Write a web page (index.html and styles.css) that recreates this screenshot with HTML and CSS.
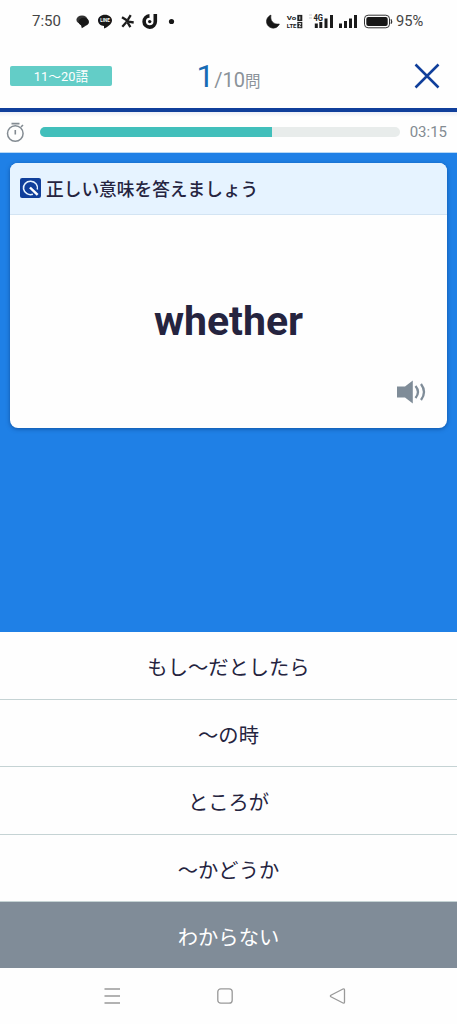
FILE: index.html
```html
<!DOCTYPE html>
<html lang="ja">
<head>
<meta charset="utf-8">
<meta name="viewport" content="width=device-width, initial-scale=1">
<title>英単語クイズ</title>
<link rel="stylesheet" href="styles.css">
</head>
<body>
<div class="app">
  <div class="status">
    <span class="clock">7:50</span>
    <svg class="notifications" width="100" height="20" viewBox="76 10 100 20">
      <ellipse cx="82" cy="18.800" rx="5.600" ry="4.300" fill="#333"/>
      <ellipse cx="83.800" cy="20.900" rx="5.200" ry="4.200" fill="#171717"/>
      <path d="M81 24l.8 3.300 4-2.500z" fill="#171717"/>
      <path d="M105 13.700c-4 0-7 2.500-7 5.700 0 3 2.500 5.200 6 5.600v2.500c3.500-1.600 8-4.500 8-8.100 0-3.200-3-5.700-7-5.700z" fill="#171717"/>
      <text class="line-mark" x="105" y="21.300" text-anchor="middle" textLength="9.500" lengthAdjust="spacingAndGlyphs">LINE</text>
      <path d="M126.800 19.300l-4.800-3M127.800 18.800l2.900-4.600M128.500 20.700l5.200.8M127.700 21.700l2.700 4.400M126.300 21.300l-4 4.400" stroke="#1c1c1c" stroke-width="2.300"/>
      <circle cx="127.400" cy="20.300" r="1.700" fill="#1c1c1c"/>
      <path d="M149.500 14.900a5.600 5.600 0 1 0 5.800 5.600v-7.400" fill="none" stroke="#171717" stroke-width="3.600"/>
      <circle cx="149.700" cy="20.600" r="1.700" fill="#171717"/>
      <circle cx="171.500" cy="20.500" r="2.600" fill="#171717"/>
    </svg>
    <svg class="signals" width="130" height="20" viewBox="264 10 130 20">
      <path d="M271 14.100a6.700 6.700 0 1 0 8.400 8.900c-5.600 .8-9.600-3-8.400-8.900z" fill="#171717" stroke="#171717" stroke-width=".6"/>
      <g class="volte" fill="#222">
        <text x="286.800" y="19.400" textLength="9.500" lengthAdjust="spacingAndGlyphs">Vo</text>
        <text x="286.800" y="26.900" textLength="9.700" lengthAdjust="spacingAndGlyphs">LTE</text>
        <rect x="297.300" y="13.900" width="5" height="6.200"/>
        <rect x="297.300" y="21" width="5" height="6.200"/>
      </g>
      <path d="M299.800 15.300v3.400M298.600 22.500h2.200l-1.800 3.200h2.200" fill="none" stroke="#fff" stroke-width=".9"/>
      <path d="M309 14h3M309 17h3" stroke="#ccc" stroke-width="1.200"/>
      <text class="network" x="313.500" y="20" textLength="9.500" lengthAdjust="spacingAndGlyphs">4G</text>
      <path d="M316.300 22.500V27M320.800 21v6M326 17.500V27M331.500 14v13M340.500 22.500V27M345.500 20v7M350.500 17.500V27M355.500 14v13" stroke="#1b1b1b" stroke-width="3"/>
      <rect x="364.500" y="14.200" width="25" height="12.600" rx="3.600" fill="none" stroke="#333"/>
      <rect x="366.300" y="16" width="21.400" height="9" rx="2" fill="#171717"/>
      <path d="M391 18.300q1.300 2.200 0 4.400" stroke="#333" fill="none" stroke-width="1.200"/>
    </svg>
    <span class="battery">95%</span>
  </div>

  <header class="header">
    <span class="range">11〜20語</span>
    <div class="counter"><span class="current">1</span><span class="total">/10</span><span class="unit">問</span></div>
    <svg class="close" width="26" height="26" viewBox="0 0 26 26"><path d="M1.500 1.500l23 23M24.500 1.500l-23 23" fill="none" stroke="#103f9b" stroke-width="2.500"/></svg>
  </header>

  <div class="timer">
    <svg width="20" height="22" viewBox="0 0 20 22" fill="none" stroke="#838b92">
      <circle cx="9.300" cy="12.500" r="7.800" stroke-width="1.500"/>
      <path d="M5.500 2.600h8M9.300 9v4.500M15 6l2-2" stroke-width="1.600"/>
    </svg>
    <div class="track"><div class="fill"></div></div>
    <span class="remaining">03:15</span>
  </div>

  <main class="stage">
    <section class="card">
      <div class="prompt">
        <svg width="21" height="20" viewBox="0 0 20 20" preserveAspectRatio="none">
          <rect width="20" height="20" rx="2" fill="#103f9b"/>
          <path d="M12.300 16.200A6.700 6.700 0 1 1 16.500 11.500" fill="none" stroke="#e6f3ff" stroke-width="1.500"/>
          <path d="M9.500 9.500l7.300 7.300" stroke="#fff" stroke-width="2.400"/>
        </svg>
        <span>正しい意味を答えましょう</span>
      </div>
      <div class="question">
        <span class="word">whether</span>
        <svg class="speaker" width="30" height="24" viewBox="0 0 30 24">
          <path d="M0 6.500h8L15.800.5v23L8 17.500H0z" fill="#7f8c98"/>
          <path d="M18.500 6q5 6 0 12M24 4q6 8 0 16" fill="none" stroke="#7f8c98" stroke-width="2.300"/>
        </svg>
      </div>
    </section>
  </main>

  <div class="answers">
    <div class="answer">もし〜だとしたら</div>
    <div class="answer">〜の時</div>
    <div class="answer">ところが</div>
    <div class="answer">〜かどうか</div>
    <div class="answer unknown">わからない</div>
  </div>

  <nav class="navbar">
    <svg width="18" height="18" viewBox="0 0 18 18"><path d="M1.500 2h15.500M1.500 9h15.500M1.500 16h15.500"/></svg>
    <svg width="18" height="18" viewBox="0 0 18 18"><rect x="1.800" y="1.800" width="14.400" height="14.400" rx="3"/></svg>
    <svg width="18" height="18" viewBox="0 0 18 18"><path d="M15 2L2.900 8.200q-1 .8 0 1.600L15 16q1.500.5 1.500-1V3q0-1.500-1.500-1z"/></svg>
  </nav>
</div>
</body>
</html>
```

FILE: styles.css
```css
* { box-sizing: border-box; }
body {
  margin: 0;
  background: #fefefe;
  color: #25243f;
  font-family: Roboto, "Noto Sans CJK JP", sans-serif;
}
.app {
  display: flex;
  flex-direction: column;
  width: 457px;
  height: 1024px;
  overflow: hidden;
}
.status {
  display: flex;
  align-items: center;
  height: 41px;
  padding-left: 32px;
  color: #444;
  font-size: 15px;
}
.clock { width: 44px; }
.notifications { flex: none; }
.signals { flex: none; margin-left: 88px; }
.battery { margin-left: 2px; font-size: 14.7px; }
.line-mark { font: bold 4.8px Roboto, sans-serif; fill: #fff; }
.volte text { font: bold 6.2px Roboto, sans-serif; }
.network { font: bold 8.5px Roboto, sans-serif; fill: #222; }

.header {
  display: grid;
  grid-template-columns: 102px 1fr 102px;
  align-items: center;
  height: 71px;
  padding: 2px 10px 0;
  border-bottom: 4px solid #103f9b;
}
.range {
  height: 20px;
  border-radius: 2px;
  background: #63cdc7;
  color: #fff;
  font-size: 12.8px;
  line-height: 22px;
  text-align: center;
}
.counter {
  padding-top: 7px;
  color: #8a9299;
  line-height: 40px;
  text-align: center;
  white-space: nowrap;
}
.current { color: #176cb4; font-size: 31.5px; }
.total { font-size: 20px; }
.unit { font-size: 15.5px; }
.close { justify-self: end; margin-right: 7px; }

.timer {
  display: flex;
  align-items: center;
  height: 41px;
  padding: 0 10px 0 6px;
  border-bottom: 1px solid #b7d8f5;
  background: linear-gradient(#eceef6, #fefefe 5px);
}
.track {
  width: 360px;
  height: 10px;
  margin-left: 14px;
  overflow: hidden;
  border-radius: 5px;
  background: #e8eceb;
}
.fill { width: 232px; height: 10px; background: #41bfbb; }
.remaining { margin-left: 10px; color: #838b92; font-size: 15px; }

.stage {
  height: 479px;
  padding: 10px;
  background: #1f80e6;
}
.card {
  height: 265px;
  overflow: hidden;
  border-radius: 8px;
  background: #fefefe;
  box-shadow: 0 1px 4px rgba(0, 40, 100, .5);
}
.prompt {
  display: flex;
  align-items: center;
  gap: 5px;
  height: 52px;
  padding: 0 0 1px 10px;
  border-bottom: 1px solid #d3e4f3;
  background: #e6f3ff;
  font-size: 17.7px;
  font-weight: 500;
}
.question {
  display: flex;
  flex-direction: column;
  height: 213px;
  padding: 81px 20px 0;
}
.word {
  font-size: 41px;
  font-weight: 700;
  line-height: 50px;
  text-align: center;
}
.speaker { align-self: flex-end; margin-top: 34px; }

.answers {
  display: grid;
  grid-template-rows: repeat(4, 67.5px) 66px;
}
.answer {
  display: flex;
  align-items: center;
  justify-content: center;
  padding-top: 2px;
  border-bottom: 1px solid #c5d3d4;
  font-size: 20.3px;
}
.unknown { border: 0; background: #808c98; color: #fff; }

.navbar {
  display: flex;
  flex: 1;
  align-items: center;
  justify-content: space-between;
  padding: 0 111px 0 103px;
}
.navbar svg { fill: none; stroke: #999; stroke-width: 1.300; }
```
